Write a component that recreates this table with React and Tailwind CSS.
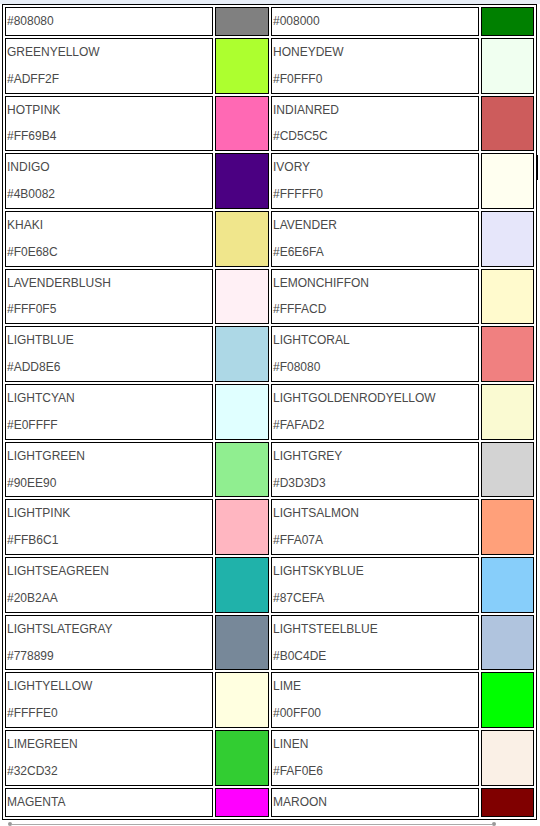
import React from 'react'

const rows = [
  { a: { hex: '#808080' }, b: { hex: '#008000' } },
  { a: { name: 'GREENYELLOW', hex: '#ADFF2F' }, b: { name: 'HONEYDEW', hex: '#F0FFF0' } },
  { a: { name: 'HOTPINK', hex: '#FF69B4' }, b: { name: 'INDIANRED', hex: '#CD5C5C' } },
  { a: { name: 'INDIGO', hex: '#4B0082' }, b: { name: 'IVORY', hex: '#FFFFF0' } },
  { a: { name: 'KHAKI', hex: '#F0E68C' }, b: { name: 'LAVENDER', hex: '#E6E6FA' } },
  { a: { name: 'LAVENDERBLUSH', hex: '#FFF0F5' }, b: { name: 'LEMONCHIFFON', hex: '#FFFACD' } },
  { a: { name: 'LIGHTBLUE', hex: '#ADD8E6' }, b: { name: 'LIGHTCORAL', hex: '#F08080' } },
  { a: { name: 'LIGHTCYAN', hex: '#E0FFFF' }, b: { name: 'LIGHTGOLDENRODYELLOW', hex: '#FAFAD2' } },
  { a: { name: 'LIGHTGREEN', hex: '#90EE90' }, b: { name: 'LIGHTGREY', hex: '#D3D3D3' } },
  { a: { name: 'LIGHTPINK', hex: '#FFB6C1' }, b: { name: 'LIGHTSALMON', hex: '#FFA07A' } },
  { a: { name: 'LIGHTSEAGREEN', hex: '#20B2AA' }, b: { name: 'LIGHTSKYBLUE', hex: '#87CEFA' } },
  { a: { name: 'LIGHTSLATEGRAY', hex: '#778899' }, b: { name: 'LIGHTSTEELBLUE', hex: '#B0C4DE' } },
  { a: { name: 'LIGHTYELLOW', hex: '#FFFFE0' }, b: { name: 'LIME', hex: '#00FF00' } },
  { a: { name: 'LIMEGREEN', hex: '#32CD32' }, b: { name: 'LINEN', hex: '#FAF0E6' } },
  { a: { name: 'MAGENTA', hex: '#FF00FF', hideHex: true }, b: { name: 'MAROON', hex: '#800000', hideHex: true } },
]

function NameCell({ c }) {
  return (
    <td className="border border-black bg-white pl-px p-0 align-middle text-[12px] leading-[26.85px] text-[#4a4a4a]">
      {c.name && <div>{c.name}</div>}
      {!c.hideHex && <div>{c.hex}</div>}
    </td>
  )
}

function Swatch({ c }) {
  return <td className="border border-black p-0" style={{ backgroundColor: c.hex }} />
}

export default function App() {
  return (
    <div className="relative w-[540px] h-[826px] bg-white overflow-hidden font-['Liberation_Sans',Arial,sans-serif]">
      <div className="h-1 bg-[#e8eef7]" />
      <div className="pl-[2px]">
        <table className="w-[535px] table-fixed border-separate border-spacing-[2px] border border-black">
          <colgroup>
            <col className="w-[208px]" />
            <col className="w-[54px]" />
            <col className="w-[208px]" />
            <col className="w-[53px]" />
          </colgroup>
          <tbody>
            {rows.map((r, i) => (
              <tr key={i}>
                <NameCell c={r.a} />
                <Swatch c={r.a} />
                <NameCell c={r.b} />
                <Swatch c={r.b} />
              </tr>
            ))}
          </tbody>
        </table>
      </div>
      {/* scroll thumb on right edge */}
      <div className="absolute left-[536px] top-[155px] w-[2px] h-[25px] bg-black" />
      {/* horizontal scroll track */}
      <div className="absolute left-[8px] top-[822px] w-[488px] flex items-center">
        <div className="w-[4px] h-[4px] rounded-full bg-[#999]" />
        <div className="flex-1 h-px bg-[#aaa]" />
        <div className="w-[4px] h-[4px] rounded-full bg-[#999]" />
      </div>
    </div>
  )
}
